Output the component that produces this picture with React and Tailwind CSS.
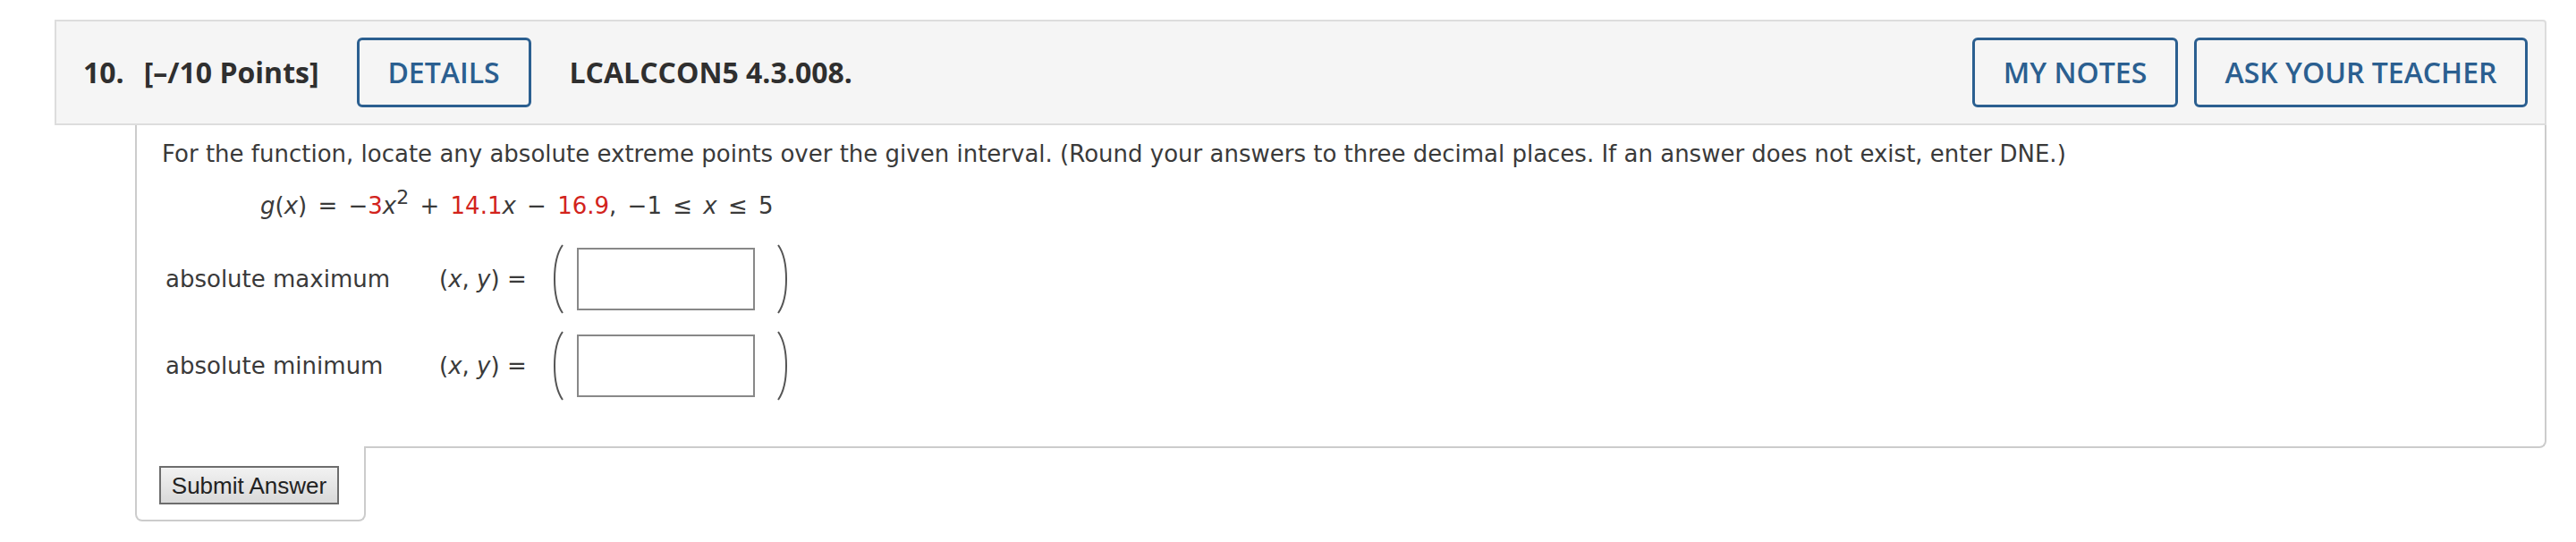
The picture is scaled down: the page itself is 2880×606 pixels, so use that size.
import React from "react";

// big bracket drawn around the answer box
function Paren({ right }) {
  return (
    <svg width="22" height="78" viewBox="0 0 22 78" className="shrink-0">
      <path
        d={right ? "M4 1 C16 18, 16 60, 4 77" : "M18 1 C6 18, 6 60, 18 77"}
        fill="none"
        stroke="#555"
        strokeWidth="2"
      />
    </svg>
  );
}

function AnswerRow({ label }) {
  return (
    <div className="flex items-center h-[78px]">
      <span className="w-[310px] pl-[4px]">{label}</span>
      <span>
        (<i>x</i>, <i>y</i>) =
      </span>
      <span className="ml-[22px]">
        <Paren />
      </span>
      <input className="ml-[12px] w-[199px] h-[70px] border-2 border-[#888] bg-white outline-none" />
      <span className="ml-[22px]">
        <Paren right />
      </span>
    </div>
  );
}

function HeaderButton({ children, className }) {
  return (
    <button
      className={
        "h-[78px] border-[3px] border-[#2b5f90] rounded-[6px] text-[#2b5f90] text-[32px] font-semibold bg-transparent " +
        className
      }
    >
      {children}
    </button>
  );
}

export default function App() {
  return (
    <div className="w-[2880px] h-[606px] bg-white pt-[22px] pl-[61px] pr-[33px] font-['DejaVu_Sans',Verdana,sans-serif] text-[26px] text-[#3a3a3a]">
      {/* QUESTION HEADER */}
      <div className="h-[118px] flex items-center border-2 border-[#ddd] rounded-tr-[4px] bg-[#f5f5f5] pl-[30px] pr-[19px] font-['Open_Sans',sans-serif] text-[32px] text-[#2f2f2f]">
        <span className="font-bold">10.</span>
        <span className="ml-[22px] font-bold">[–/10 Points]</span>
        <HeaderButton className="ml-[42px] w-[195px]">DETAILS</HeaderButton>
        <span className="ml-[43px] font-bold">LCALCCON5 4.3.008.</span>
        <div className="ml-auto flex gap-[18px]">
          <HeaderButton className="w-[230px]">MY NOTES</HeaderButton>
          <HeaderButton className="w-[373px]">ASK YOUR TEACHER</HeaderButton>
        </div>
      </div>

      {/* QUESTION BODY */}
      <div className="ml-[90px] h-[361px] border-2 border-t-0 border-[#ccc] rounded-br-[8px] pl-[28px] pt-[14px]">
        <p className="leading-[36px]">
          For the function, locate any absolute extreme points over the given
          interval. (Round your answers to three decimal places. If an answer
          does not exist, enter DNE.)
        </p>
        <p className="mt-[22px] ml-[110px] leading-[36px] [word-spacing:4px]">
          <i>g</i>(<i>x</i>) = −<span className="text-[#d2231c]">3</span>
          <i>x</i>
          <sup className="text-[22px]">2</sup> +{" "}
          <span className="text-[#d2231c]">14.1</span>
          <i>x</i> − <span className="text-[#d2231c]">16.9</span>, −1 ≤{" "}
          <i>x</i> ≤ 5
        </p>
        <div className="mt-[25px] flex flex-col gap-[19px]">
          <AnswerRow label="absolute maximum" />
          <AnswerRow label="absolute minimum" />
        </div>
      </div>

      {/* SUBMIT */}
      <div className="relative ml-[90px] -mt-[2px] w-[258px] h-[84px] bg-white border-2 border-t-0 border-[#ccc] rounded-b-[8px] pl-[25px] pt-[22px]">
        <button className="h-[43px] w-[201px] border-2 border-[#6d6d6d] bg-gradient-to-b from-[#f2f2f2] to-[#d9d9d9] font-['Liberation_Sans',Arial,sans-serif] text-[26px] text-[#222] leading-none">
          Submit Answer
        </button>
      </div>
    </div>
  );
}
